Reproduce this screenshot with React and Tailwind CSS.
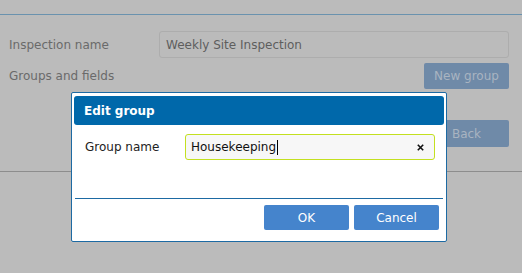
import React from 'react';

const font = { fontFamily: '"DejaVu Sans", Tahoma, Verdana, sans-serif' };

function EditGroupDialog() {
  return (
    <div className="absolute left-[71px] top-[92px] w-[376px] h-[150px] bg-white border border-[#1d6aa3] rounded-[2px] p-[1px] flex flex-col">
      <div className="h-[29px] mx-[1px] mt-[2px] bg-[#0068aa] rounded-[3px] flex items-center pl-[10px]">
        <span className="text-white font-bold text-[12px]">Edit group</span>
      </div>

      <div className="flex items-center mt-[9px] pl-[12px]">
        <span className="w-[100px] text-[12px] text-[#222]">Group name</span>
        <div className="w-[250px] h-[26px] bg-[#f7f7f7] border border-[#c3e020] rounded-[3px] flex items-center pl-[5px] pr-[10px]">
          <span className="text-[12px] text-[#111]">Housekeeping</span>
          <span className="w-px h-[15px] bg-black ml-[1px]" />
          <svg className="ml-auto" width="7" height="7" viewBox="0 0 7 7">
            <path d="M0.8 0.8 L6.2 6.2 M6.2 0.8 L0.8 6.2" stroke="#111" strokeWidth="1.6" />
          </svg>
        </div>
      </div>

      <div className="mt-[38px] mx-[2px] h-px bg-[#1d6aa3]" />

      <div className="flex justify-end gap-[5px] mt-[6px] pr-[6px]">
        <button className="w-[85px] h-[25px] bg-[#4584cc] rounded-[2px] text-white text-[12px]">OK</button>
        <button className="w-[85px] h-[25px] bg-[#4584cc] rounded-[2px] text-white text-[12px]">Cancel</button>
      </div>
    </div>
  );
}

export default function App() {
  return (
    <div className="relative w-[522px] h-[273px] bg-[#bbbbbb] overflow-hidden" style={font}>
      <div className="h-[14px]" />
      <div className="h-px bg-[#6a92ae]" />

      <div className="flex items-center mt-[16px] pl-[9px] pr-[13px]">
        <span className="w-[150px] text-[12px] text-[#6a6a6a]">Inspection name</span>
        <div className="flex-1 h-[27px] border border-[#adadad] rounded-[3px] flex items-center pl-[6px]">
          <span className="text-[12px] text-[#5e5e5e]">Weekly Site Inspection</span>
        </div>
      </div>

      <div className="flex items-center justify-between mt-[5px] pl-[9px] pr-[13px]">
        <span className="text-[12px] text-[#6a6a6a]">Groups and fields</span>
        <button className="w-[85px] h-[26px] bg-[#6f8aa8] rounded-[2px] text-[12px] text-[#a9b4c1]">New group</button>
      </div>

      <div className="flex justify-end mt-[31px] pr-[13px]">
        <button className="w-[85px] h-[27px] bg-[#6f8aa8] rounded-[2px] text-[12px] text-[#a9b4c1]">Back</button>
      </div>

      <div className="mt-[24px] h-px bg-[#8d8d8d]" />

      <EditGroupDialog />
    </div>
  );
}
